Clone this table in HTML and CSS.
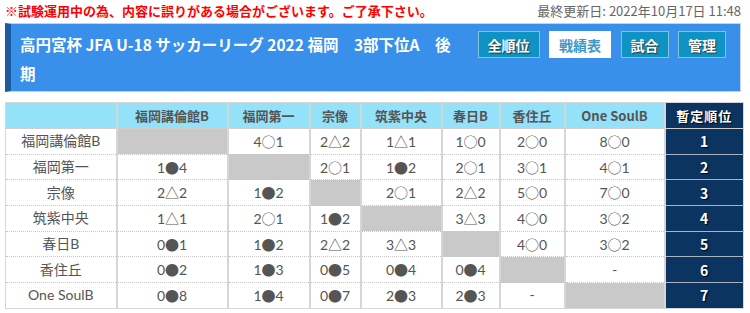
FILE: index.html
```html
<!DOCTYPE html>
<html lang="ja">
<head>
<meta charset="utf-8">
<link rel="stylesheet" href="styles.css">
</head>
<body>
<div class="page">
  <div class="topbar">
    <span class="notice">※試験運用中の為、内容に誤りがある場合がございます。ご了承下さい。</span>
    <span class="updated">最終更新日: 2022年10月17日 11:48</span>
  </div>
  <div class="headbox">
    <h1 class="title">高円宮杯 JFA U-18 サッカーリーグ 2022 福岡　3部下位A　後期</h1>
    <div class="btns">
      <a class="btn">全順位</a>
      <a class="btn active">戦績表</a>
      <a class="btn">試合</a>
      <a class="btn">管理</a>
    </div>
  </div>
  <table class="grid">
    <colgroup>
      <col class="c1"><col class="c2"><col class="c3"><col class="c4"><col class="c5"><col class="c6"><col class="c7"><col class="c8"><col class="c9">
    </colgroup>
    <thead>
      <tr>
        <th></th><th>福岡講倫館B</th><th>福岡第一</th><th>宗像</th><th>筑紫中央</th><th>春日B</th><th>香住丘</th><th>One SoulB</th><th class="rank">暫定順位</th>
      </tr>
    </thead>
    <tbody>
      <tr><td class="name">福岡講倫館B</td><td class="x"></td><td>4<span class="m">○</span>1</td><td>2<span class="m">△</span>2</td><td>1<span class="m">△</span>1</td><td>1<span class="m">○</span>0</td><td>2<span class="m">○</span>0</td><td>8<span class="m">○</span>0</td><td class="rank">1</td></tr>
      <tr><td class="name">福岡第一</td><td>1<span class="m">●</span>4</td><td class="x"></td><td>2<span class="m">○</span>1</td><td>1<span class="m">●</span>2</td><td>2<span class="m">○</span>1</td><td>3<span class="m">○</span>1</td><td>4<span class="m">○</span>1</td><td class="rank">2</td></tr>
      <tr><td class="name">宗像</td><td>2<span class="m">△</span>2</td><td>1<span class="m">●</span>2</td><td class="x"></td><td>2<span class="m">○</span>1</td><td>2<span class="m">△</span>2</td><td>5<span class="m">○</span>0</td><td>7<span class="m">○</span>0</td><td class="rank">3</td></tr>
      <tr><td class="name">筑紫中央</td><td>1<span class="m">△</span>1</td><td>2<span class="m">○</span>1</td><td>1<span class="m">●</span>2</td><td class="x"></td><td>3<span class="m">△</span>3</td><td>4<span class="m">○</span>0</td><td>3<span class="m">○</span>2</td><td class="rank">4</td></tr>
      <tr><td class="name">春日B</td><td>0<span class="m">●</span>1</td><td>1<span class="m">●</span>2</td><td>2<span class="m">△</span>2</td><td>3<span class="m">△</span>3</td><td class="x"></td><td>4<span class="m">○</span>0</td><td>3<span class="m">○</span>2</td><td class="rank">5</td></tr>
      <tr><td class="name">香住丘</td><td>0<span class="m">●</span>2</td><td>1<span class="m">●</span>3</td><td>0<span class="m">●</span>5</td><td>0<span class="m">●</span>4</td><td>0<span class="m">●</span>4</td><td class="x"></td><td>-</td><td class="rank">6</td></tr>
      <tr><td class="name">One SoulB</td><td>0<span class="m">●</span>8</td><td>1<span class="m">●</span>4</td><td>0<span class="m">●</span>7</td><td>2<span class="m">●</span>3</td><td>2<span class="m">●</span>3</td><td>-</td><td class="x"></td><td class="rank">7</td></tr>
    </tbody>
  </table>
</div>
</body>
</html>
```

FILE: styles.css
```css
html, body {
  margin: 0;
  padding: 0;
  background: #fff;
}
.page {
  padding: 0 7px 0 5px;
  font-family: Lato, "Noto Sans CJK JP", sans-serif;
}
.topbar {
  display: flex;
  justify-content: space-between;
  align-items: center;
  height: 20px;
  margin-bottom: 3px;
  font-size: 13px;
  font-family: "Noto Sans CJK JP", sans-serif;
}
.notice {
  color: #f00;
  font-weight: bold;
}
.updated {
  color: #666;
  margin-right: 2px;
}
.headbox {
  display: flex;
  align-items: flex-start;
  background: #3890ea;
  border: 1px solid #c8d4e0;
  border-left: 6px solid #1b5b9f;
  padding: 6px 14px 4px 9px;
  margin-right: 2px;
  height: 57px;
}
.title {
  margin: 0;
  flex: 0 0 438px;
  font-family: "Noto Sans CJK JP", sans-serif;
  font-size: 15.5px;
  font-weight: bold;
  line-height: 29px;
  color: #fff;
}
.btns {
  display: flex;
  flex-shrink: 0;
  gap: 9.5px;
  margin-left: auto;
  margin-top: 1px;
}
.btn {
  display: flex;
  align-items: center;
  justify-content: center;
  white-space: nowrap;
  height: 25px;
  padding: 0 9px;
  background: #0e93c4;
  border: 1px solid #7fc8dc;
  color: #fff;
  font-family: "Noto Sans CJK JP", sans-serif;
  font-size: 14px;
  font-weight: bold;
  text-shadow: 1px 1px 1px #333;
}
.btn.active {
  background: #fff;
  color: #3d98c9;
  text-shadow: none;
  border-color: #fff;
}
.grid {
  margin-top: 10px;
  width: 738px;
  border-collapse: collapse;
  table-layout: fixed;
  border: 1px solid #d6d6d6;
  color: #555;
  font-size: 14px;
}
.c1 { width: 111px; }
.c2 { width: 111px; }
.c3 { width: 82px; }
.c4 { width: 51px; }
.c5 { width: 81px; }
.c6 { width: 58px; }
.c7 { width: 65px; }
.c8 { width: 100px; }
.c9 { width: 79px; }
.grid th {
  background: #94e1fa;
  height: 25px;
  padding: 0;
  font-size: 13px;
  font-weight: bold;
  color: #555;
  border-left: 2px solid #d6d6d6;
  border-bottom: 1px solid #cfcfcf;
  font-family: "Noto Sans CJK JP", sans-serif;
}
.grid th:first-child { border-left: none; }
.grid th.rank {
  background: #0b3461;
  color: #fff;
  text-shadow: 1px 1px 1px #000;
  letter-spacing: 1px;
}
.grid td {
  height: 24.7px;
  padding: 0;
  text-align: center;
  border-left: 2px solid #d6d6d6;
  border-bottom: 1px dotted #c8c8c8;
  line-height: 1;
}
.grid td .m {
  font-family: "Noto Sans CJK JP", sans-serif;
  color: #555;
}
.grid td.name {
  border-left: none;
  font-family: Lato, "Noto Sans CJK JP", sans-serif;
}
.grid td.x {
  background: #c9c9c9;
}
.grid td.rank {
  background: #0b3461;
  color: #fff;
  font-weight: bold;
  text-shadow: 1px 1px 1px #000;
  border-bottom: 1px solid #a9b4c0;
  font-family: "Noto Sans CJK JP", sans-serif;
}
.grid tr:last-child td.rank { border-bottom: none; }
```
